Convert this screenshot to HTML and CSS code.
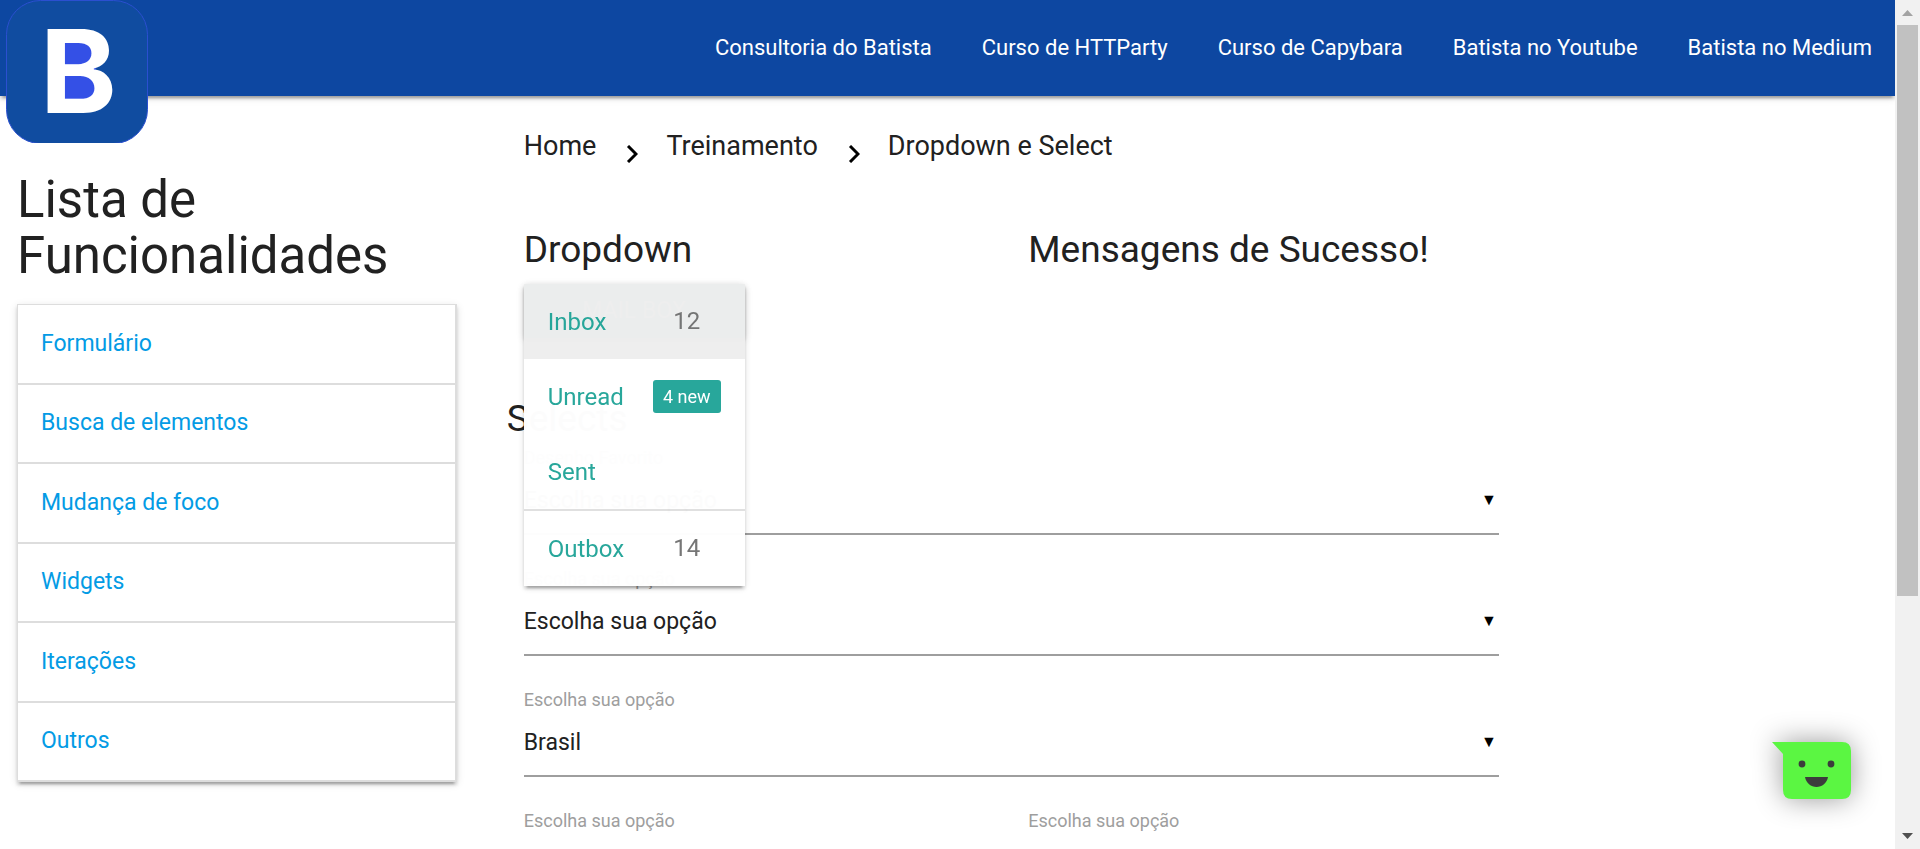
FILE: index.html
```html
<!DOCTYPE html>
<html lang="pt-BR">
<head>
<meta charset="utf-8">
<title>Dropdown e Select</title>
<link rel="stylesheet" href="styles.css">
</head>
<body>
<div class="page">
  <header class="navbar">
    <a class="logo" href="#" aria-label="Batista">
      <svg width="142" height="143" viewBox="0 0 142 143">
        <rect x="0.5" y="0.5" width="141" height="143" rx="34" fill="#104ca0" stroke="#2b4fd0"/>
        <rect x="50" y="42" width="40" height="58" fill="#3450e6"/>
        <text class="logo-letter" x="34" y="113">B</text>
      </svg>
    </a>
    <nav class="nav-links">
      <a href="#">Consultoria do Batista</a>
      <a href="#">Curso de HTTParty</a>
      <a href="#">Curso de Capybara</a>
      <a href="#">Batista no Youtube</a>
      <a href="#">Batista no Medium</a>
    </nav>
  </header>
  <div class="layout">
    <aside class="sidebar">
      <h4 class="sidebar-title">Lista de Funcionalidades</h4>
      <ul class="features">
        <li><a href="#">Formulário</a></li>
        <li><a href="#">Busca de elementos</a></li>
        <li><a href="#">Mudança de foco</a></li>
        <li><a href="#">Widgets</a></li>
        <li><a href="#">Iterações</a></li>
        <li><a href="#">Outros</a></li>
      </ul>
    </aside>
    <main class="content">
      <nav class="breadcrumbs">
        <a href="#">Home</a>
        <svg class="chevron" width="14" height="18" viewBox="0 0 14 18"><path d="M4 1l8 8-8 8"/></svg>
        <a href="#">Treinamento</a>
        <svg class="chevron" width="14" height="18" viewBox="0 0 14 18"><path d="M4 1l8 8-8 8"/></svg>
        <a href="#">Dropdown e Select</a>
      </nav>
      <div class="row columns">
        <section>
          <h5 class="heading">Dropdown</h5>
          <div class="dropdown">
            <button class="dropdown-button" type="button">Mail Box</button>
            <ul class="dropdown-menu">
              <li class="active"><a href="#">Inbox<span class="badge">12</span></a></li>
              <li><a href="#">Unread<span class="badge badge-new">4 new</span></a></li>
              <li><a href="#">Sent</a></li>
              <li class="divided"><a href="#">Outbox<span class="badge">14</span></a></li>
            </ul>
          </div>
        </section>
        <section>
          <h5 class="heading">Mensagens de Sucesso!</h5>
        </section>
      </div>
      <h5 class="heading selects-title">Selects</h5>
      <div class="row">
        <div class="field">
          <label for="s1">Desenho Favorito</label>
          <div class="select"><select id="s1"><option>Escolha sua opção</option></select><span class="caret">▼</span></div>
        </div>
        <div class="field">
          <label for="s2">Escolha sua opção</label>
          <div class="select"><select id="s2"><option>Escolha sua opção</option></select><span class="caret">▼</span></div>
        </div>
        <div class="field">
          <label for="s3">Escolha sua opção</label>
          <div class="select"><select id="s3"><option>Brasil</option></select><span class="caret">▼</span></div>
        </div>
      </div>
      <div class="row columns">
        <div class="field">
          <label for="s4">Escolha sua opção</label>
          <div class="select"><select id="s4"><option>Escolha sua opção</option></select><span class="caret">▼</span></div>
        </div>
        <div class="field">
          <label for="s5">Escolha sua opção</label>
          <div class="select"><select id="s5"><option>Escolha sua opção</option></select><span class="caret">▼</span></div>
        </div>
      </div>
    </main>
  </div>
  <button class="chat" type="button" aria-label="Chat">
    <svg width="80" height="58" viewBox="0 0 80 58">
      <path d="M0 0H70Q79 0 79 9V48Q79 57 70 57H20Q11 57 11 48V12Z" fill="#5bf642"/>
      <circle cx="30" cy="22" r="3.4" fill="#3c3c3c"/>
      <circle cx="59" cy="22" r="3.4" fill="#3c3c3c"/>
      <path d="M33 35H56C55 41 50 45 44.500 45S34 41 33 35Z" fill="#3c3c3c"/>
    </svg>
  </button>
</div>
<div class="scrollbar" aria-hidden="true">
  <svg class="scroll-up" width="11" height="6" viewBox="0 0 11 6"><path d="M0 6L5.500 0L11 6Z"/></svg>
  <div class="track"><div class="thumb"></div><div class="rest"></div></div>
  <svg class="scroll-down" width="11" height="6" viewBox="0 0 11 6"><path d="M0 0L5.500 6L11 0Z"/></svg>
</div>
</body>
</html>
```
FILE: styles.css
```css
* {
  box-sizing: border-box;
}

body {
  margin: 0;
  height: 100vh;
  display: flex;
  overflow: hidden;
  background: #fff;
  color: #212121;
  font-family: Roboto, "Open Sans", sans-serif;
  font-size: 23px;
  line-height: 34px;
}

a {
  color: inherit;
  text-decoration: none;
}

ul {
  margin: 0;
  padding: 0;
  list-style: none;
}

h4,
h5 {
  margin: 0;
  font-weight: 400;
}

.page {
  position: relative;
  flex: 1;
  min-width: 0;
  overflow: hidden;
}

.navbar {
  position: relative;
  display: flex;
  justify-content: flex-end;
  align-items: center;
  height: 96px;
  padding-right: 23px;
  background: #0d47a1;
  color: #fff;
  box-shadow: 0 3px 3px rgba(0, 0, 0, 0.14), 0 5px 2px -3px rgba(0, 0, 0, 0.2), 0 2px 8px rgba(0, 0, 0, 0.12);
}

.logo {
  position: absolute;
  top: 0;
  left: 6px;
}

.logo svg {
  display: block;
}

.logo-letter {
  fill: #fff;
  font-family: Inter, sans-serif;
  font-size: 116px;
  font-weight: 700;
}

.nav-links {
  display: flex;
  gap: 50px;
  font-size: 22px;
}

.layout {
  display: grid;
  grid-template-columns: 25% minmax(0, 1fr);
}

.sidebar {
  padding: 76px 17px 0;
}

.sidebar-title {
  margin-bottom: 20px;
  font-size: 51px;
  line-height: 56px;
}

.features {
  display: grid;
  grid-auto-rows: 1fr;
  min-height: 478px;
  border: 1px solid #ddd;
  border-right-width: 2px;
  border-bottom: 0;
  color: #039be5;
  box-shadow: 0 3px 3px rgba(0, 0, 0, 0.14), 0 5px 2px -3px rgba(0, 0, 0, 0.2), 0 2px 8px rgba(0, 0, 0, 0.12);
}

.features li {
  display: flex;
  align-items: center;
  padding: 0 23px;
  border-bottom: 2px solid #ddd;
}

.content {
  width: 71%;
  margin-left: 33px;
}

.breadcrumbs {
  display: flex;
  align-items: center;
  gap: 28px;
  padding: 30px 17px 0;
  font-size: 27px;
  line-height: 40px;
}

.chevron {
  margin-top: 16px;
  fill: none;
  stroke: #000;
  stroke-width: 3;
}

.columns {
  display: grid;
  grid-template-columns: 1fr 1fr;
}

.row > * {
  padding: 0 17px;
}

.breadcrumbs + .row {
  padding-top: 63px;
}

.heading {
  font-size: 37px;
  line-height: 41px;
}

.dropdown {
  position: relative;
  width: 221px;
  padding-top: 14px;
}

.dropdown-button {
  display: block;
  width: 100%;
  height: 54px;
  border: 0;
  border-radius: 3px;
  background: #26a69a;
  color: #fff;
  font: inherit;
  text-transform: uppercase;
  box-shadow: 0 3px 3px rgba(0, 0, 0, 0.14), 0 2px 8px rgba(0, 0, 0, 0.12);
}

.dropdown-menu {
  position: absolute;
  top: 14px;
  left: 0;
  right: 0;
  z-index: 1;
  background: #fff;
  color: #26a69a;
  font-size: 24px;
  opacity: 0.99;
  box-shadow: 0 3px 3px rgba(0, 0, 0, 0.14), 0 5px 2px -3px rgba(0, 0, 0, 0.2), 0 2px 8px rgba(0, 0, 0, 0.12);
}

.dropdown-menu a {
  display: flex;
  align-items: center;
  justify-content: space-between;
  height: 75px;
  padding: 0 24px;
}

.dropdown-menu .active {
  background: #eee;
}

.dropdown-menu .divided {
  border-top: 2px solid #e0e0e0;
}

.badge {
  min-width: 68px;
  color: #757575;
  line-height: 33px;
  text-align: center;
}

.badge-new {
  border-radius: 3px;
  background: #26a69a;
  color: #fff;
  font-size: 18px;
}

.selects-title {
  padding: 60px 0 9px;
}

.field {
  display: flex;
  flex-direction: column;
}

.row > .field {
  padding-bottom: 34px;
}

.field label {
  color: #9e9e9e;
  font-size: 18px;
  line-height: 20px;
}

.select {
  display: grid;
  align-items: center;
  border-bottom: 2px solid #9e9e9e;
}

.select > * {
  grid-area: 1 / 1;
}

.select select {
  width: 100%;
  height: 65px;
  padding: 0;
  border: 0;
  appearance: none;
  background: transparent;
  color: #212121;
  font: inherit;
}

.caret {
  justify-self: end;
  padding: 0 2px 2px 0;
  color: #000;
  font-size: 16px;
  pointer-events: none;
}

.chat {
  position: absolute;
  right: 43px;
  bottom: 49px;
  padding: 0;
  border: 0;
  background: none;
}

.chat svg {
  display: block;
  overflow: visible;
  filter: drop-shadow(0 0 14px rgba(0, 0, 0, 0.4));
}

.scrollbar {
  display: flex;
  flex-direction: column;
  align-items: center;
  width: 25px;
  padding: 10px 2px;
  background: #f1f1f1;
}

.scroll-up {
  fill: #a3a3a3;
}

.scroll-down {
  fill: #505050;
}

.track {
  display: flex;
  flex: 1;
  flex-direction: column;
  width: 100%;
  padding: 9px 0;
}

.thumb {
  flex: 5;
  background: #c1c1c1;
}

.rest {
  flex: 2;
}
```
